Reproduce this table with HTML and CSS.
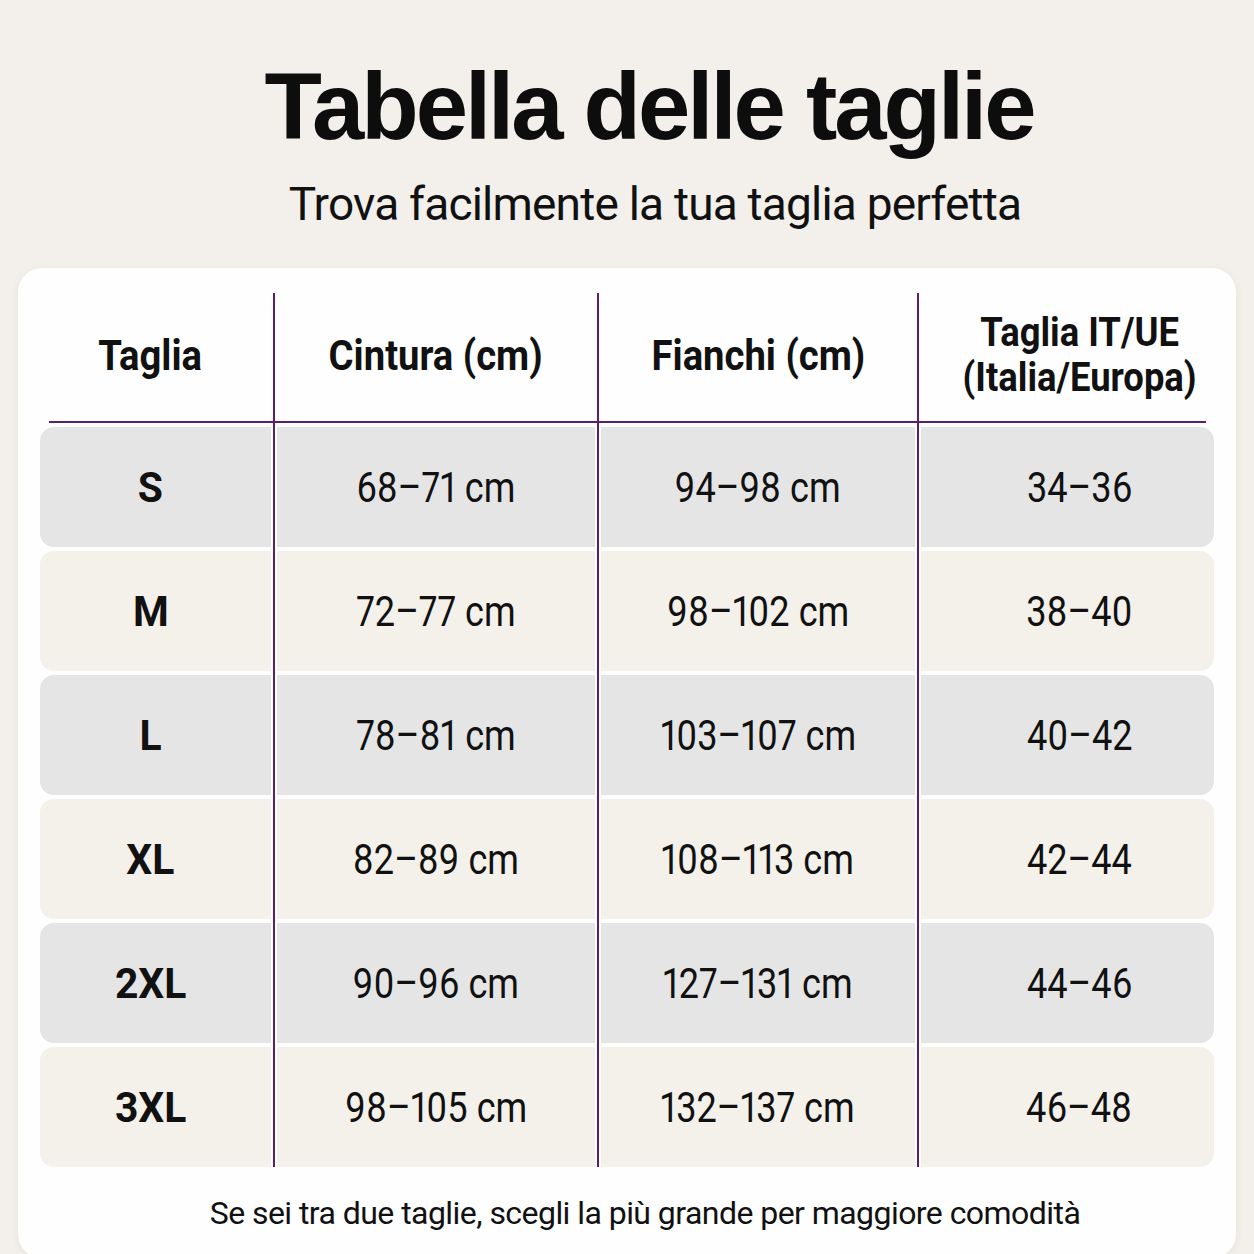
FILE: index.html
```html
<!DOCTYPE html>
<html lang="it">
<head>
<meta charset="utf-8">
<title>Tabella delle taglie</title>
<link rel="stylesheet" href="styles.css">
</head>
<body>
<main class="page">
  <header class="intro">
    <h1 class="title">Tabella delle taglie</h1>
    <p class="subtitle">Trova facilmente la tua taglia perfetta</p>
  </header>
  <section class="card">
    <div class="grid">
      <div class="sep sep-1"></div>
      <div class="sep sep-2"></div>
      <div class="sep sep-3"></div>

      <div class="th c1"><span class="txt">Taglia</span></div>
      <div class="th c2"><span class="txt">Cintura (cm)</span></div>
      <div class="th c3"><span class="txt">Fianchi (cm)</span></div>
      <div class="th c4 th-two"><span class="txt">Taglia IT/UE<br>(Italia/Europa)</span></div>

      <div class="hline"></div>

      <div class="td c1 label gray"><span class="txt">S</span></div>
      <div class="td c2 gray"><span class="txt">68–71 cm</span></div>
      <div class="td c3 gray"><span class="txt">94–98 cm</span></div>
      <div class="td c4 gray"><span class="txt">34–36</span></div>

      <div class="td c1 label beige"><span class="txt">M</span></div>
      <div class="td c2 beige"><span class="txt">72–77 cm</span></div>
      <div class="td c3 beige"><span class="txt">98–102 cm</span></div>
      <div class="td c4 beige"><span class="txt">38–40</span></div>

      <div class="td c1 label gray"><span class="txt">L</span></div>
      <div class="td c2 gray"><span class="txt">78–81 cm</span></div>
      <div class="td c3 gray"><span class="txt">103–107 cm</span></div>
      <div class="td c4 gray"><span class="txt">40–42</span></div>

      <div class="td c1 label beige"><span class="txt">XL</span></div>
      <div class="td c2 beige"><span class="txt">82–89 cm</span></div>
      <div class="td c3 beige"><span class="txt">108–113 cm</span></div>
      <div class="td c4 beige"><span class="txt">42–44</span></div>

      <div class="td c1 label gray"><span class="txt">2XL</span></div>
      <div class="td c2 gray"><span class="txt">90–96 cm</span></div>
      <div class="td c3 gray"><span class="txt">127–131 cm</span></div>
      <div class="td c4 gray"><span class="txt">44–46</span></div>

      <div class="td c1 label beige"><span class="txt">3XL</span></div>
      <div class="td c2 beige"><span class="txt">98–105 cm</span></div>
      <div class="td c3 beige"><span class="txt">132–137 cm</span></div>
      <div class="td c4 beige"><span class="txt">46–48</span></div>
    </div>
    <p class="note">Se sei tra due taglie, scegli la più grande per maggiore comodità</p>
  </section>
</main>
</body>
</html>
```

FILE: styles.css
```css
* { box-sizing: border-box; }

html, body {
  margin: 0;
  padding: 0;
  background: #f3efea;
  color: #111111;
  font-family: Roboto, "Liberation Sans", Arial, sans-serif;
}

.page {
  width: 1254px;
  height: 1254px;
  overflow: hidden;
  padding: 60px 18px 0 18px;
}

.intro {
  display: flex;
  flex-direction: column;
  align-items: center;
}

.title {
  margin: 0;
  padding-left: 44px;
  font-family: "Liberation Sans", Arial, sans-serif;
  font-size: 94px;
  line-height: 94px;
  font-weight: 700;
  letter-spacing: -3px;
  color: #0d0d0d;
}

.subtitle {
  margin: 27px 0 0 0;
  padding-left: 56px;
  font-size: 46px;
  line-height: 46px;
  font-weight: 400;
  letter-spacing: -0.8px;
  color: #111;
}

.card {
  margin-top: 41px;
  background: #fefefe;
  border-radius: 24px;
  box-shadow: 0 2px 10px rgba(0, 0, 0, 0.06);
  padding: 25px 22px 40px 22px;
  height: 990px;
}

.grid {
  display: grid;
  grid-template-columns: 231px 2px 318px 2px 314px 2px minmax(0, 1fr);
  grid-template-rows: 124px 2px repeat(6, 120px);
  column-gap: 2px;
  row-gap: 4px;
}

.sep {
  grid-row: 1 / -1;
  background: #5a1e6a;
}
.sep-1 { grid-column: 2; }
.sep-2 { grid-column: 4; }
.sep-3 { grid-column: 6; }

.c1 { grid-column: 1; padding-right: 10px; }
.c2 { grid-column: 3; }
.c3 { grid-column: 5; }
.c4 { grid-column: 7; padding-left: 24px; }

.txt {
  display: inline-block;
  white-space: nowrap;
  text-align: center;
}

.th {
  grid-row: 1;
  display: flex;
  align-items: center;
  justify-content: center;
  text-align: center;
  font-size: 42px;
  font-weight: 700;
  color: #111;
}
.th .txt { transform: scaleX(0.91); }

.th-two {
  font-size: 40px;
  line-height: 45px;
}

.hline {
  grid-row: 2;
  grid-column: 1 / -1;
  margin: 0 8px 0 9px;
  background: #5a1e6a;
}

.td {
  display: flex;
  align-items: center;
  justify-content: center;
  font-size: 43px;
  font-weight: 400;
  font-variant-numeric: proportional-nums;
  color: #111;
}
.td .txt { transform: scaleX(0.84); }

.label {
  font-weight: 700;
}
.label .txt { transform: scaleX(0.95); }

.gray { background: #e5e5e5; }
.beige { background: #f4f0ea; }

.c1.td { border-radius: 14px 0 0 14px; }
.c4.td { border-radius: 0 14px 14px 0; }

.note {
  margin: 30px 0 0 0;
  padding-left: 36px;
  text-align: center;
  font-size: 32px;
  line-height: 32px;
  letter-spacing: -0.55px;
  color: #111;
}
```
